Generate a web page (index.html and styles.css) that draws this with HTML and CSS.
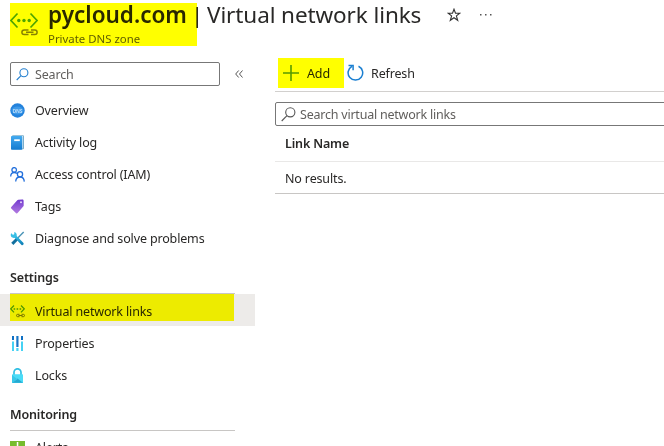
FILE: index.html
```html
<!DOCTYPE html>
<html lang="en">
<head>
<meta charset="utf-8">
<title>pycloud.com | Virtual network links</title>
<link rel="stylesheet" href="styles.css">
</head>
<body>
<svg class="defs" width="0" height="0">
  <defs>
    <linearGradient id="blue" x2="0" y2="1"><stop stop-color="#43aaf0"/><stop offset="1" stop-color="#137bd0"/></linearGradient>
    <linearGradient id="purple" x2="0" y2="1"><stop stop-color="#7139cf"/><stop offset="1" stop-color="#b27be0"/></linearGradient>
    <linearGradient id="cyan" x2="0" y2="1"><stop stop-color="#36c5ec"/><stop offset="1" stop-color="#1282b8"/></linearGradient>
  </defs>
</svg>
<header class="header">
  <svg class="zone-icon" width="28" height="26" viewBox="0 0 28 26" fill="none">
    <path d="M7.500 2.500 1 9.500l6.500 7M20.500 2.500 27 9.500l-6.500 7" stroke="#4fa51b" stroke-width="1.700"/>
    <g fill="#4fa51b"><circle cx="8.800" cy="9.500" r="1.700"/><circle cx="14" cy="9.500" r="1.700"/><circle cx="19.200" cy="9.500" r="1.700"/></g>
    <path d="M18.500 19h-4.300a2.300 2.300 0 0 0 0 4.600h4.300M21 19h3.800a2.300 2.300 0 0 1 0 4.600H21M16 21.300h7.500" stroke="#87831e" stroke-width="1.500"/>
  </svg>
  <div class="heading">
    <h1 class="title"><span class="zone-name">pycloud.com</span><span class="bar">|</span><span class="page-name">Virtual network links</span></h1>
    <p class="subtitle"><span>Private DNS zone</span></p>
  </div>
  <svg class="star" width="14" height="14" viewBox="0 0 14 14" fill="none" stroke="#333" stroke-width="1.100"><path d="m7 1.200 1.500 4.100h4.300L9.400 7.900l1.300 4.400L7 9.700l-3.700 2.600 1.300-4.400-3.400-2.600h4.300z"/></svg>
  <svg class="more" width="12" height="2" viewBox="0 0 12 2" fill="#555"><path d="M0 0h1.500v1.500H0zM5 0h1.500v1.500H5zM10 0h1.500v1.500H10z"/></svg>
  <i class="marker marker-title"></i>
</header>
<div class="body">
  <nav class="sidebar">
    <div class="search-row">
      <div class="search">
        <svg width="13" height="13" viewBox="0 0 13 13" fill="none" stroke="#2680cf" stroke-width="1.100"><circle cx="7.900" cy="4.800" r="4"/><path d="M5 7.700.7 12"/></svg>
        <span>Search</span>
      </div>
      <svg class="collapse" width="8" height="8" viewBox="0 0 8 8" fill="none" stroke="#555"><path d="M3.700.5.700 4l3 3.500M7.500.5l-3 3.500 3 3.500"/></svg>
    </div>
    <ul class="menu">
      <li class="item">
        <svg width="15" height="15" viewBox="0 0 15 15"><circle cx="7.500" cy="7.500" r="7.200" fill="#2382dc"/><ellipse cx="7.500" cy="7.500" rx="6" ry="4" fill="#3d99e8"/><text class="dns" x="2.700" y="9.500" textLength="9.600" lengthAdjust="spacingAndGlyphs">DNS</text></svg>
        <span>Overview</span></li>
      <li class="item">
        <svg width="15" height="15" viewBox="0 0 15 15"><rect x="2" y=".3" width="12" height="14" rx="1" fill="#7aaecb"/><path d="M3 1h10v12.500H3z" fill="#e5eff5"/><rect x="1" y="1" width="11.300" height="13.700" rx=".8" fill="url(#blue)"/><path d="M4.200 4.300h5.600v1.800H4.200z" fill="#fff"/></svg>
        <span>Activity log</span></li>
      <li class="item">
        <svg width="15" height="15" viewBox="0 0 15 15" fill="none" stroke="#2370dc" stroke-width="1.300"><circle cx="4.200" cy="2.900" r="2.300"/><path d="M.7 9.500c0-2.600 1.300-4 3.500-4 1.200 0 2 .3 2.700 1"/><circle cx="10" cy="7.300" r="2.600"/><path d="M5.700 14.600c.1-3 1.600-4.600 4.300-4.600s4.100 1.600 4.300 4.600"/></svg>
        <span>Access control (IAM)</span></li>
      <li class="item">
        <svg width="15" height="15" viewBox="0 0 15 15"><path d="M8.300.7 12.300.5c.8 0 1.300.5 1.300 1.200l.1 4.800c0 .4-.2.800-.5 1.100l-5.600 6.500c-.4.500-1 .5-1.500.1L1.300 9.600c-.5-.4-.5-1 0-1.500l6-6.900c.2-.3.600-.5 1-.5z" fill="url(#purple)"/><circle cx="11" cy="3.200" r="1" fill="#e7d8fa"/></svg>
        <span>Tags</span></li>
      <li class="item">
        <svg width="15" height="15" viewBox="0 0 15 15" fill="none"><path d="M13.700 1 7 7.700" stroke="#4a93b6" stroke-width="1.400"/><path d="m7.300 7.700-5 5.200" stroke="#116f9e" stroke-width="3"/><path d="m4.500 4.600 7.800 8.200" stroke="url(#cyan)" stroke-width="2.700" stroke-linecap="round"/><path d="M1.300 2.200a3 3 0 1 0 3-1.200v2.500l-1.200.6z" fill="#39bfe5"/></svg>
        <span>Diagnose and solve problems</span></li>
    </ul>
    <h2 class="section"><span>Settings</span></h2>
    <ul class="menu">
      <li class="item selected">
        <svg width="15" height="15" viewBox="0 0 15 15" fill="none"><path d="M4 1.500.8 4.900 4 8.300M11 1.500l3.200 3.400L11 8.300" stroke="#4b961b" stroke-width="1.200"/><path d="M3.600 4.900h1.600M6.600 4.900h1.600M9.600 4.900h1.600" stroke="#4b961b" stroke-width="1.500"/><path d="M9.500 10.300H7.700a1.200 1.200 0 0 0 0 2.400h1.800M11.500 10.300h1.800a1.200 1.200 0 0 1 0 2.400h-1.800M8.500 11.500H12.500" stroke="#77731e"/></svg>
        <span>Virtual network links</span>
        <i class="marker marker-item"></i></li>
      <li class="item">
        <svg width="15" height="15" viewBox="0 0 15 15"><path d="M2 0h2v4H2zM11 0h2v4h-2z" fill="#0f70c4"/><path d="M2 5.500h2V15H2zM11 5.500h2V15h-2z" fill="#45d2f4"/><path d="M6.300 0h2.200v11H6.300z" fill="#1877c8"/><path d="M6.300 12h2.200v3H6.300z" fill="#45d2f4"/></svg>
        <span>Properties</span></li>
      <li class="item">
        <svg width="15" height="15" viewBox="0 0 15 15"><path d="M4 7V4.300a3.500 3.500 0 0 1 7 0V7" fill="none" stroke="#32bfe3" stroke-width="1.700"/><rect x="2" y="6.300" width="11" height="8.700" rx=".6" fill="#4bdcf7"/><path d="m2 14.700 5.500-4.300 5.500 4.300z" fill="#25a9d1"/><path d="m2 7 5.500 4.300L2 15z" fill="#38c7e8"/></svg>
        <span>Locks</span></li>
    </ul>
    <h2 class="section"><span>Monitoring</span></h2>
    <ul class="menu">
      <li class="item">
        <svg width="15" height="15" viewBox="0 0 15 15"><path d="M0 1h15v13H0z" fill="#76bc2d"/><path d="M6.800 2h1.500v7H6.800zM6.800 10.500h1.500V12H6.800z" fill="#fff"/></svg>
        <span>Alerts</span></li>
    </ul>
  </nav>
  <main class="content">
    <div class="toolbar">
      <button class="command add">
        <svg width="16" height="16" viewBox="0 0 16 16" stroke="#579b25" stroke-width="1.600"><path d="M8 0v16M0 8h16"/></svg>
        <span>Add</span><i class="marker marker-add"></i></button>
      <button class="command refresh">
        <svg width="17" height="18" viewBox="0 0 17 18" fill="none" stroke="#1b7fd1" stroke-width="1.500"><path d="M11.500 2.200a7.300 7.300 0 1 1-6.600.2M1.500 1.500h4.600v4.700"/></svg>
        <span>Refresh</span></button>
    </div>
    <div class="search filter">
      <svg width="15" height="15" viewBox="0 0 15 15" fill="none" stroke="#555" stroke-width="1.100"><circle cx="9.300" cy="5.300" r="4.600"/><path d="M6 8.700.7 14"/></svg>
      <span>Search virtual network links</span>
    </div>
    <div class="cell head"><span>Link Name</span></div>
    <div class="cell empty"><span>No results.</span></div>
  </main>
</div>
</body>
</html>
```

FILE: styles.css
```css
* { box-sizing: border-box; }
body {
  margin: 0;
  width: 664px;
  height: 446px;
  overflow: hidden;
  background: #fff;
  color: #292827;
  font: 12.5px/18px "Noto Sans", sans-serif;
  letter-spacing: -.15px;
}
h1, h2, p, ul { margin: 0; padding: 0; font-weight: 400; }
ul { list-style: none; }
svg { display: block; flex: none; }
span { white-space: nowrap; }
.defs { position: absolute; }
.marker { position: absolute; background: #ff0; mix-blend-mode: multiply; }

.header { position: relative; display: flex; height: 58px; padding-left: 10px; }
.zone-icon { margin-top: 11px; }
.heading { width: 400px; margin-left: 10px; }
.title { display: flex; height: 30px; font-size: 22.5px; line-height: 30px; letter-spacing: -.1px; }
.zone-name { width: 143px; font-weight: 600; letter-spacing: 0; }
.bar { width: 16px; }
.subtitle { height: 16px; font-size: 11.4px; line-height: 17px; letter-spacing: 0; color: #605e5c; }
.star { margin: 8px 0 0 -1px; }
.more { margin: 14px 0 0 19px; }
.marker-title { left: 10px; top: 3px; width: 187px; height: 43px; }

.body { display: flex; height: 388px; }
.sidebar { flex: none; width: 255px; }
.search-row { display: flex; align-items: center; height: 36px; padding: 4px 0 8px 10px; }
.search {
  display: flex;
  align-items: center;
  width: 210px;
  height: 24px;
  padding-left: 5px;
  border: 1px solid #777;
  border-radius: 2px;
  color: #605e5c;
}
.search span { margin: 1px 0 0 6px; }
.collapse { margin-left: 15px; }
.item { position: relative; display: flex; align-items: center; height: 32px; padding-left: 10px; }
.item span { margin: 1px 0 0 10px; }
.selected { height: 33px; padding-top: 1px; background: linear-gradient(#edebe9, #edebe9) 0 0 / 100% 32px no-repeat; }
.marker-item { left: 10px; top: 0; width: 224px; height: 27px; }
.section { width: 225px; height: 40px; margin-left: 10px; padding-top: 15px; border-bottom: 1px solid #c8c6c4; font-size: 12.5px; font-weight: 600; }
.dns { font: 700 5px "Noto Sans", sans-serif; fill: #b9dcfa; }

.content { flex: none; width: 389px; margin-left: 20px; overflow: hidden; }
.toolbar { display: flex; height: 34px; border-bottom: 1px solid #d2d0ce; }
.command { position: relative; display: flex; align-items: center; height: 30px; padding: 0; border: 0; background: none; color: inherit; font: inherit; letter-spacing: inherit; }
.command span { margin-top: 2px; }
.add { width: 66px; margin-left: 3px; padding-left: 5px; }
.add span { margin-left: 8px; }
.marker-add { inset: 0; }
.refresh { padding-left: 3px; }
.refresh span { margin-left: 7px; }
.filter { width: 400px; margin-top: 10px; letter-spacing: -.22px; }
.filter span { margin-left: 4px; }
.cell { display: flex; align-items: center; padding-left: 10px; }
.head { height: 36px; border-bottom: 1px solid #e9e8e7; font-weight: 600; }
.empty { height: 32px; padding-top: 2px; border-bottom: 1px solid #c8c6c4; }
```
